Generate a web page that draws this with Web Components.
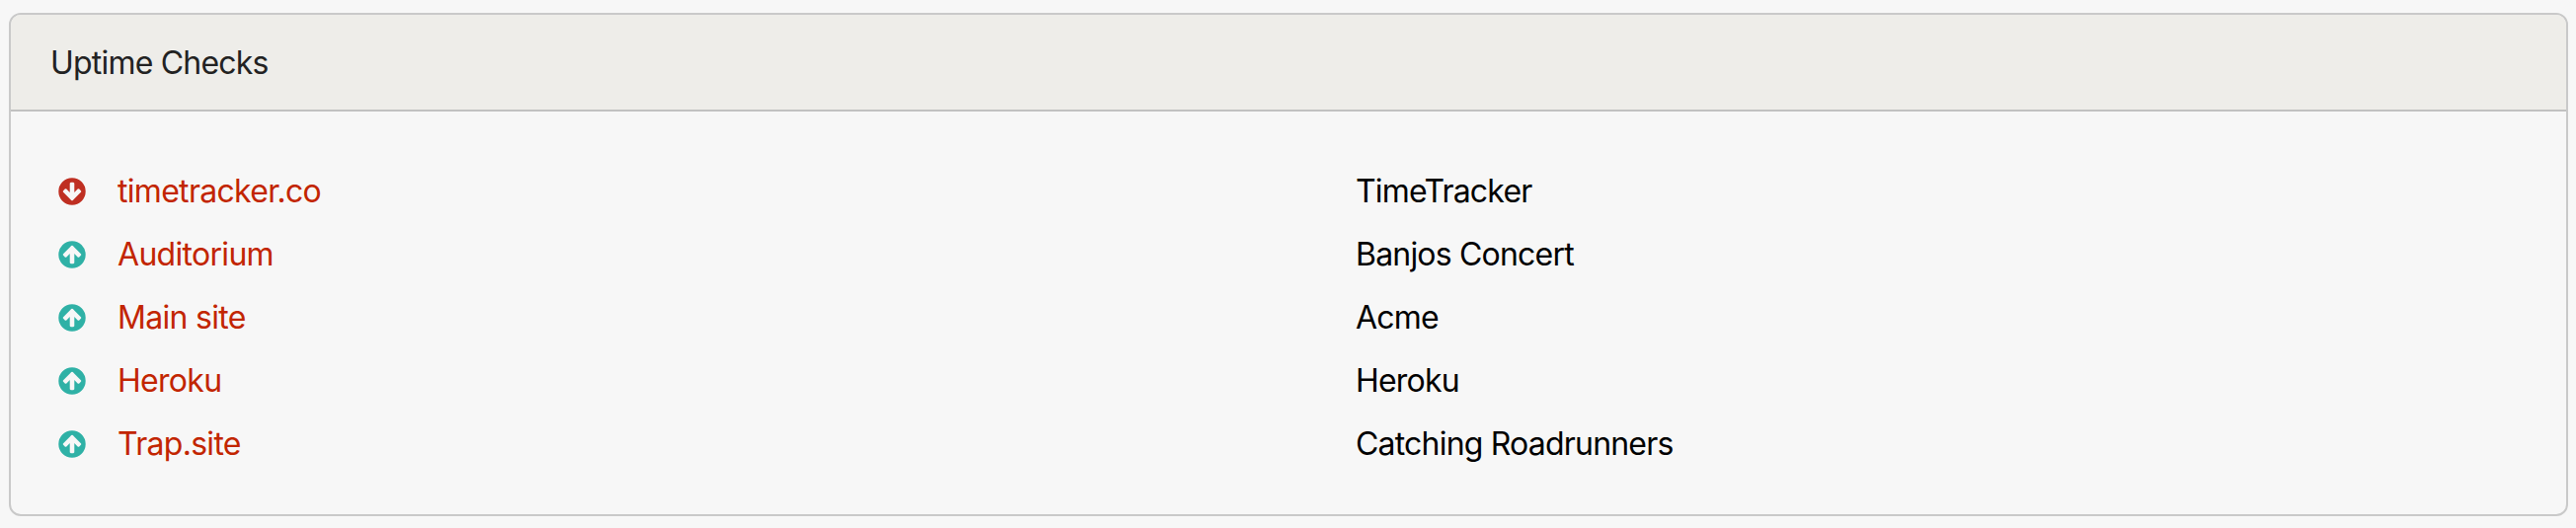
<!DOCTYPE html>
<html lang="en">
<head>
    <meta charset="utf-8">
    <title>Uptime Checks</title>
    <style>
        body {
            box-sizing: border-box;
            height: 535px;
            margin: 0;
            padding: 13px 8px 12px 9px;
            background: #f7f7f7;
            color: #000;
            font-family: Inter, "Liberation Sans", sans-serif;
            font-size: 32px;
            font-weight: 430;
            line-height: 48px;
            letter-spacing: -0.8px;
        }
    </style>
</head>
<body>
    <uptime-card>
        <span slot="title">Uptime Checks</span>
        <uptime-check status="down" name="timetracker.co">TimeTracker</uptime-check>
        <uptime-check status="up" name="Auditorium">Banjos Concert</uptime-check>
        <uptime-check status="up" name="Main site">Acme</uptime-check>
        <uptime-check status="up" name="Heroku">Heroku</uptime-check>
        <uptime-check status="up" name="Trap.site">Catching Roadrunners</uptime-check>
    </uptime-card>

    <script>
        class UptimeCard extends HTMLElement {
            constructor() {
                super();

                const template = `
                    <style>
                        :host {
                            display: flex;
                            flex-direction: column;
                            box-sizing: border-box;
                            height: 100%;
                            border: 2px solid #c9c9c9;
                            border-radius: 12px;
                            overflow: hidden;
                        }

                        header {
                            padding: 25px 40px 23px;
                            background: #eeede9;
                            border-bottom: 2px solid #c1c1c1;
                            color: #222;
                        }

                        section {
                            padding: 49px 40px 47px;
                        }
                    </style>

                    <header><slot name="title"></slot></header>
                    <section><slot></slot></section>
                `;

                let shadow = this.attachShadow({ mode: 'open' });
                shadow.innerHTML = template;
            }
        }

        class StatusIcon extends HTMLElement {
            connectedCallback() {
                // the arrow points down, so "up" is the same drawing turned over
                const template = `
                    <style>
                        :host {
                            display: block;
                            width: 32px;
                            height: 32px;
                            color: #bf2f22;
                        }

                        :host([status="up"]) {
                            color: #2fb1a6;
                            transform: rotate(180deg);
                        }

                        svg {
                            display: block;
                        }
                    </style>

                    <svg width="32" height="32" viewBox="0 0 1792 1792" fill="currentColor" fill-rule="evenodd">
                        <path d="M1412 897q0-27-18-45l-91-91q-18-18-45-18t-45 18l-189 189v-502q0-26-19-45t-45-19h-128q-26 0-45 19t-19 45v502l-189-189q-19-19-45-19t-45 19l-91 91q-18 18-18 45t18 45l362 362 91 91q18 18 45 18t45-18l91-91 362-362q18-18 18-45zM1664 896a768 768 0 1 1-1536 0a768 768 0 1 1 1536 0z"/>
                    </svg>
                `;

                let shadow = this.attachShadow({ mode: 'open' });
                shadow.innerHTML = template;
            }
        }

        class UptimeCheck extends HTMLElement {
            connectedCallback() {
                const template = `
                    <style>
                        :host {
                            display: grid;
                            grid-template-columns: 68px 1254px 1fr;
                            align-items: center;
                            height: 64px;
                        }

                        status-icon {
                            margin: 0 0 1px 6px;
                        }

                        a {
                            color: #c22500;
                            letter-spacing: -0.7px;
                            text-decoration: none;
                        }
                    </style>

                    <status-icon status="${this.getAttribute('status')}"></status-icon>
                    <div><a href="#">${this.getAttribute('name')}</a></div>
                    <div><slot></slot></div>
                `;

                let shadow = this.attachShadow({ mode: 'open' });
                shadow.innerHTML = template;
            }
        }

        customElements.define('uptime-card', UptimeCard);
        customElements.define('status-icon', StatusIcon);
        customElements.define('uptime-check', UptimeCheck);
    </script>
</body>
</html>
